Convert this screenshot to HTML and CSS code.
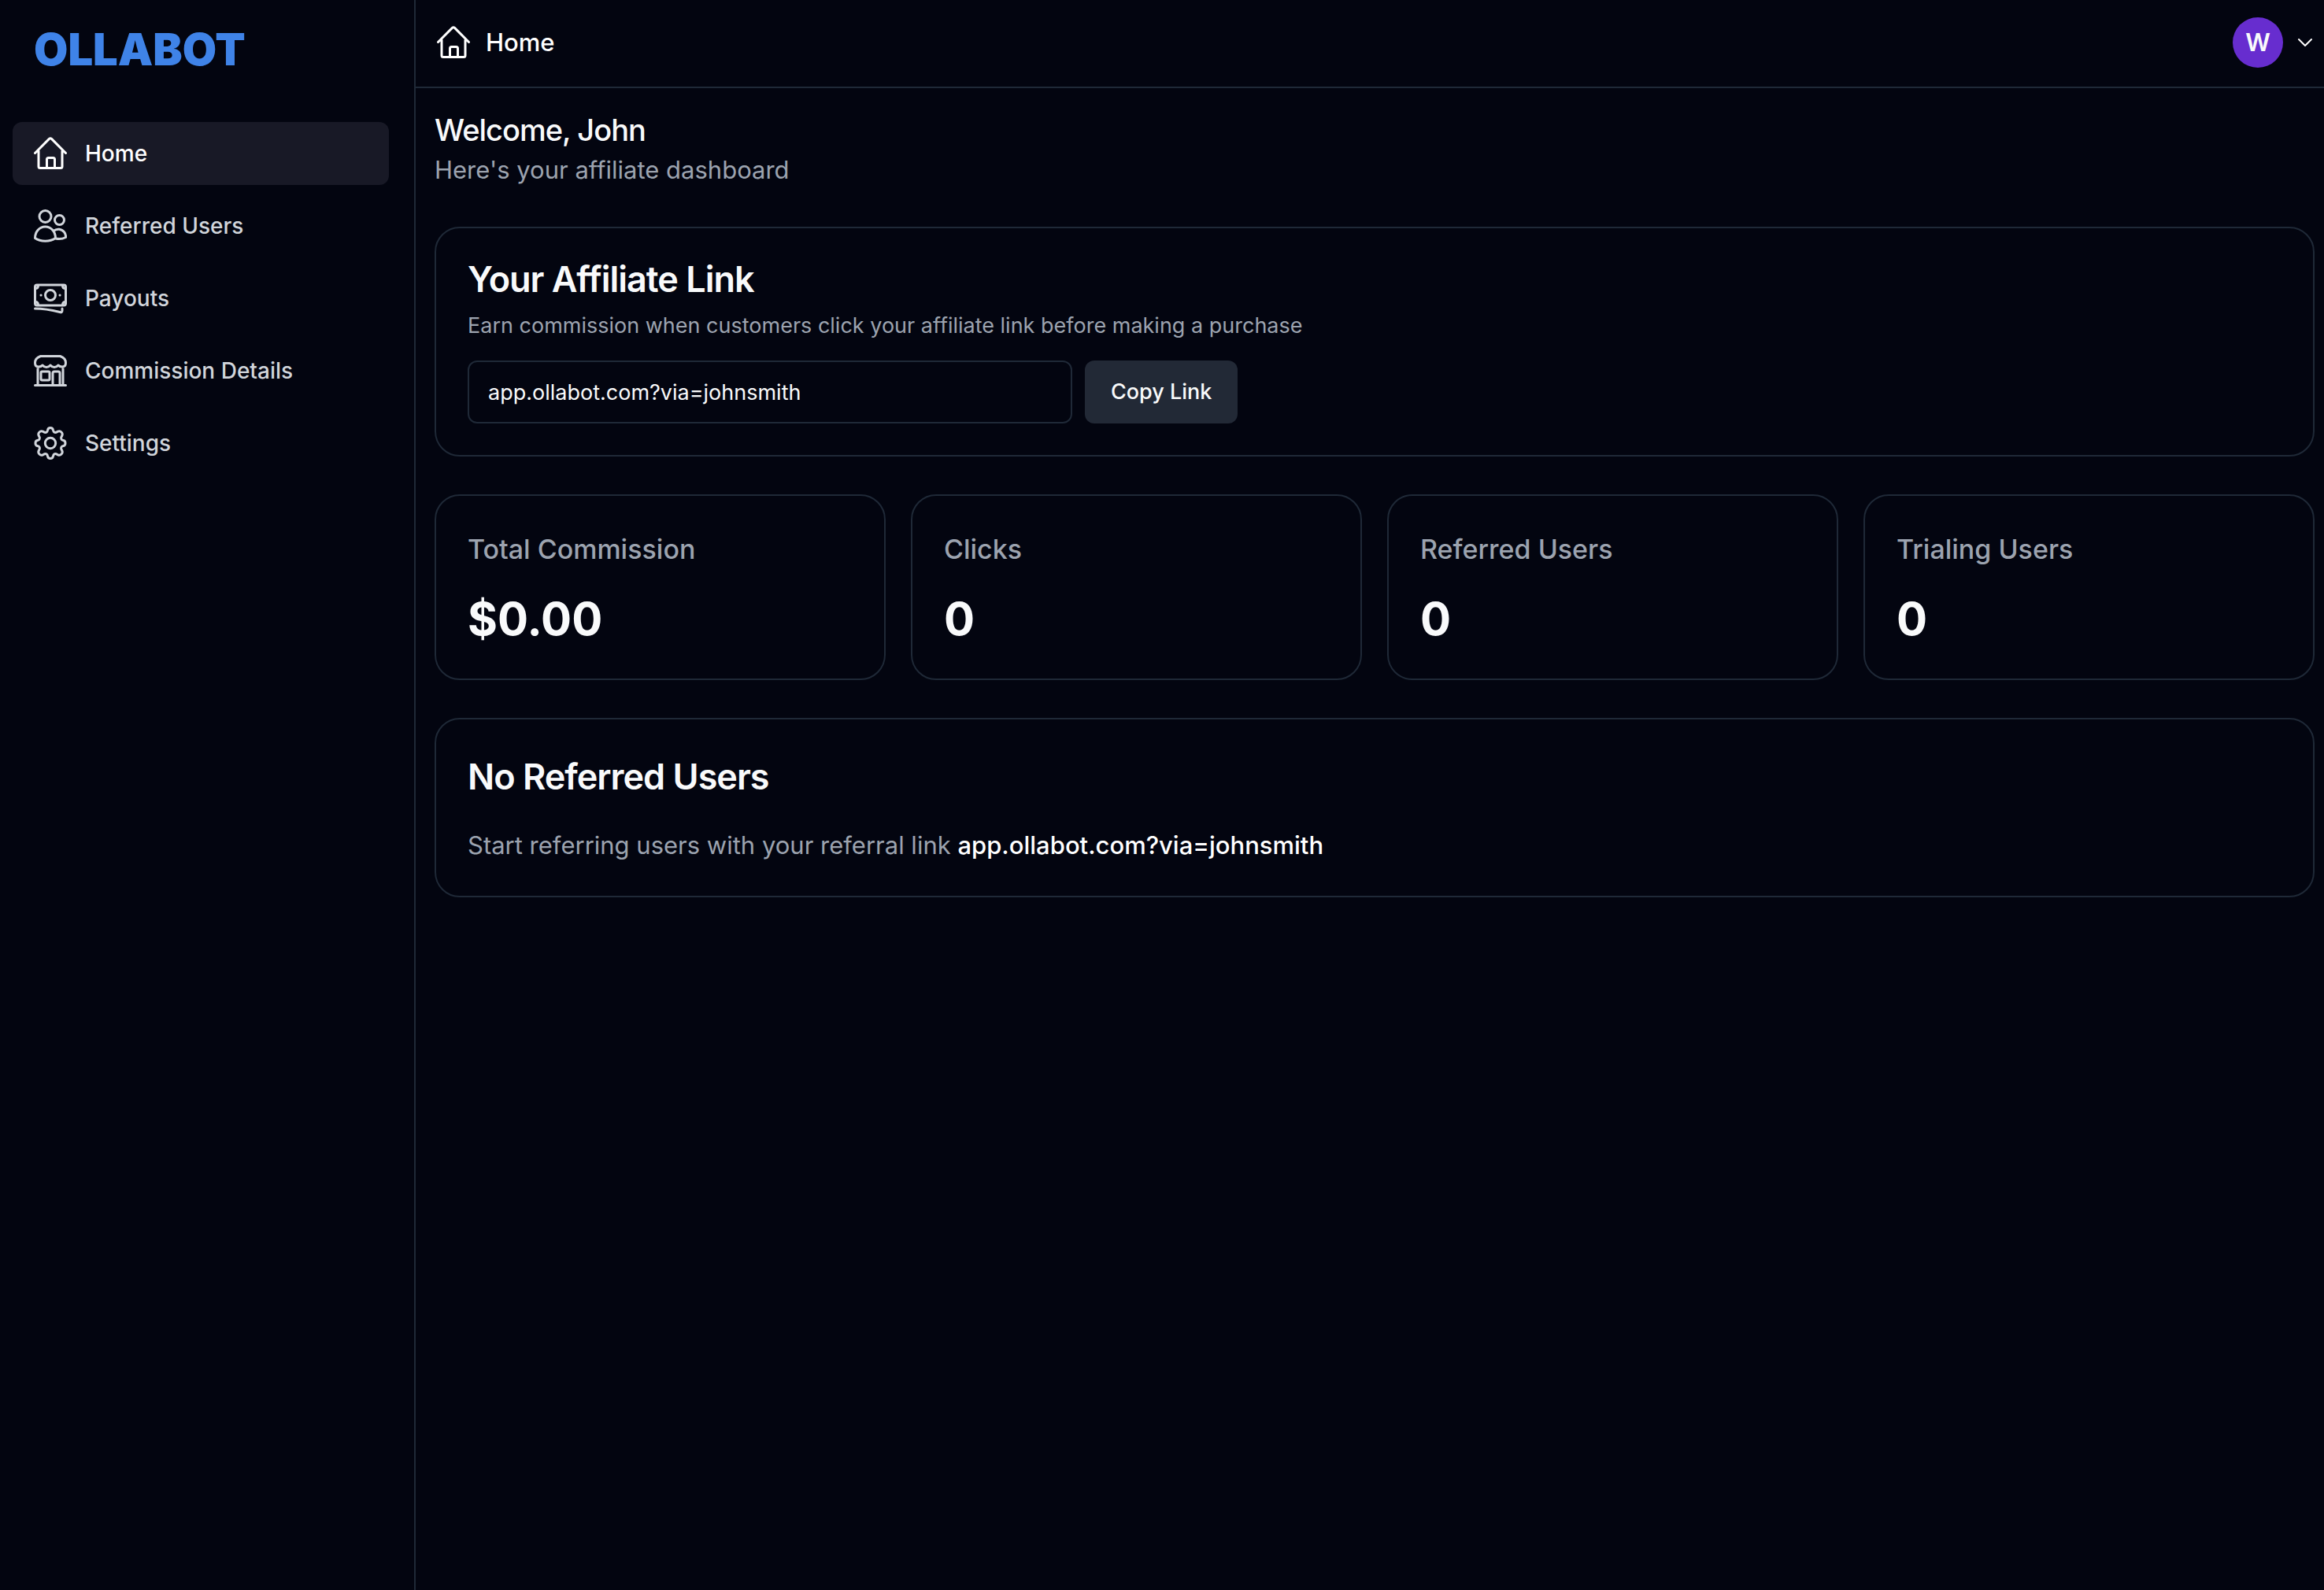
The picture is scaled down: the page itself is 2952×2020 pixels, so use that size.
FILE: index.html
```html
<!DOCTYPE html>
<html lang="en">
<head>
<meta charset="utf-8">
<title>Ollabot Affiliates</title>
<link rel="stylesheet" href="styles.css">
</head>
<body>
<svg class="sprite" aria-hidden="true">
  <symbol id="home" viewBox="0 0 42 42"><path d="M6 18V37.500Q6 39.500 8 39.500H34Q36 39.500 36 37.500V18M1.500 20.500 19.500 2.400Q21 1 22.500 2.400L40.500 20.500M16.500 39V28.500Q16.500 26.500 18.500 26.500H24.500Q26.500 26.500 26.500 28.500V39"/></symbol>
  <symbol id="users" viewBox="0 0 42 42"><circle cx="14.500" cy="9" r="7.500"/><circle cx="32.500" cy="13.500" r="6"/><path d="M1.500 36.500C1.500 28.500 7 22 14.500 22S27.500 28.500 27.500 36.500C20.500 41.500 8.500 41.500 1.500 36.500ZM25 27.500C27 25.800 29.500 25 32 25.200C37.500 25.800 41 30.500 40.500 35.500C36.500 37.500 32 38 27.500 37"/></symbol>
  <symbol id="payouts" viewBox="0 0 42 42"><rect x="1.500" y="4" width="39" height="26" rx="2.500"/><circle cx="21" cy="17" r="6.500"/><path d="M2 8.500Q5.500 8.500 5.500 5M36.500 5Q36.500 8.500 40 8.500M2 25.500Q5.500 25.500 5.500 29.500M36.500 29.500Q36.500 25.500 40 25.500M1.500 34C14 34 23 36 33 38.500Q36 39.500 36 36.500V34"/><path d="M9 17h.1M33 17h.1"/></symbol>
  <symbol id="store" viewBox="0 0 42 42"><path d="M5 16V39.500M37 16V39.500M1.500 39.500H40.500M8.500 2.500H33.500Q40.500 5 40.500 11Q40.500 16 36 16Q32.500 16 31 14Q29 16.500 26 16.500Q23 16.500 21 14Q19 16.500 16 16.500Q13 16.500 11 14Q9.500 16 6 16Q1.500 16 1.500 11Q1.500 5 8.500 2.500ZM24 39V24Q24 22 26 22H31Q33 22 33 24V39"/><rect x="9" y="22" width="11" height="11" rx="1.500"/></symbol>
  <symbol id="gear" viewBox="0 0 42 42"><circle cx="21" cy="21" r="6.700"/><path d="M17.500 4.500Q18 1.500 21 1.500T24.500 4.500Q25.200 8 28.300 7.300L30.500 6.200Q33 5 35 7T35.800 11.500L34.700 13.700Q34 16.800 37.500 17.500Q40 18 40 21T37.500 24.500Q34 25.200 34.700 28.300L35.800 30.500Q37 33 35 35T30.500 35.800L28.300 34.700Q25.200 34 24.500 37.500Q24 40.500 21 40.500T17.500 37.500Q16.800 34 13.700 34.700L11.500 35.800Q9 37 7 35T6.200 30.500L7.300 28.300Q8 25.200 4.500 24.500Q2 24 2 21T4.500 17.500Q8 16.800 7.300 13.700L6.200 11.500Q5 9 7 7T11.500 6.200L13.700 7.300Q16.800 8 17.500 4.500Z"/></symbol>
</svg>
<div class="app">
  <aside class="sidebar">
    <a class="logo" href="#">OLLABOT</a>
    <nav class="nav">
      <a class="nav-item active" href="#"><svg class="icon"><use href="#home"/></svg>Home</a>
      <a class="nav-item" href="#"><svg class="icon"><use href="#users"/></svg>Referred Users</a>
      <a class="nav-item" href="#"><svg class="icon"><use href="#payouts"/></svg>Payouts</a>
      <a class="nav-item" href="#"><svg class="icon"><use href="#store"/></svg>Commission Details</a>
      <a class="nav-item" href="#"><svg class="icon"><use href="#gear"/></svg>Settings</a>
    </nav>
  </aside>
  <div class="main">
    <header class="topbar">
      <div class="crumb"><svg class="icon"><use href="#home"/></svg>Home</div>
      <button class="account" type="button" aria-label="Account menu">
        <span class="avatar">W</span>
        <svg class="chevron" viewBox="0 0 18 10"><path d="M1 1 9 9 17 1"/></svg>
      </button>
    </header>
    <main class="content">
      <div class="welcome">
        <h1>Welcome, John</h1>
        <p>Here's your affiliate dashboard</p>
      </div>
      <section class="card">
        <h2>Your Affiliate Link</h2>
        <p class="hint"><label for="link">Earn commission when customers click your affiliate link before making a purchase</label></p>
        <div class="link-row">
          <input id="link" class="link-input" type="text" value="app.ollabot.com?via=johnsmith" readonly>
          <button class="copy" type="button">Copy Link</button>
        </div>
      </section>
      <div class="stats">
        <section class="card stat"><h3>Total Commission</h3><p>$0.00</p></section>
        <section class="card stat"><h3>Clicks</h3><p>0</p></section>
        <section class="card stat"><h3>Referred Users</h3><p>0</p></section>
        <section class="card stat"><h3>Trialing Users</h3><p>0</p></section>
      </div>
      <section class="card empty">
        <h2>No Referred Users</h2>
        <p>Start referring users with your referral link <a href="#">app.ollabot.com?via=johnsmith</a></p>
      </section>
    </main>
  </div>
</div>
</body>
</html>
```
FILE: styles.css
```css
* { box-sizing: border-box; margin: 0; }
body {
  background: #030510;
  color: #f9fafb;
  font-family: Inter, "Liberation Sans", sans-serif;
  font-size: 27px;
  line-height: 40px;
}
a { color: inherit; text-decoration: none; }
button, input { font: inherit; color: inherit; }
.sprite { display: none; }
.icon {
  width: 42px;
  height: 42px;
  flex: none;
  fill: none;
  stroke: currentColor;
  stroke-width: 3px;
  stroke-linecap: round;
  stroke-linejoin: round;
}
.app { display: flex; min-height: 100vh; }
.sidebar {
  width: 528px;
  flex: none;
  padding: 28px 32px 0 16px;
  border-right: 2px solid #1f2937;
}
.logo {
  display: block;
  padding-left: 27px;
  color: #3f83e8;
  font-size: 56px;
  line-height: 70px;
  font-weight: 900;
}
.nav { display: flex; flex-direction: column; gap: 12px; margin-top: 57px; }
.nav-item {
  display: flex;
  align-items: center;
  gap: 23px;
  height: 80px;
  padding: 0 27px;
  border-radius: 12px;
  color: #d1d5db;
  font-size: 28px;
  font-weight: 500;
}
.nav-item.active { background: #181926; color: #fff; }
.main { flex: 1; min-width: 0; }
.topbar {
  display: flex;
  align-items: center;
  justify-content: space-between;
  height: 112px;
  padding: 0 15px 2px 27px;
  border-bottom: 2px solid #1f2937;
}
.crumb { display: flex; align-items: center; gap: 20px; font-size: 31px; font-weight: 500; color: #fff; }
.account { display: flex; align-items: center; gap: 19px; padding: 0; border: 0; background: none; }
.avatar { width: 64px; height: 64px; border-radius: 50%; background: #672dcf; font-size: 31px; line-height: 64px; font-weight: 600; text-align: center; }
.chevron { width: 18px; height: 10px; fill: none; stroke: #fff; stroke-width: 2px; stroke-linecap: round; stroke-linejoin: round; overflow: visible; }
.content { padding: 32px 12px 48px 24px; }
.welcome { margin-bottom: 50px; }
h1 { font-size: 38px; line-height: 42px; font-weight: 500; letter-spacing: -1px; }
.welcome p { margin-top: 8px; font-size: 31px; line-height: 44px; color: #9ca3af; }
.card { border: 2px solid #1f2937; border-radius: 32px; padding: 40px; }
h2 { font-size: 45px; line-height: 50px; font-weight: 600; letter-spacing: -1px; }
.hint { margin-top: 14px; color: #9ca3af; }
.link-row { display: flex; gap: 16px; margin-top: 24px; }
.link-input { width: 768px; height: 80px; padding: 0 24px; border: 2px solid #1f2937; border-radius: 12px; background: transparent; }
.copy { height: 80px; padding: 0 33px; border: 0; border-radius: 12px; background: #222936; font-weight: 500; }
.stats { display: grid; grid-template-columns: repeat(4, 1fr); gap: 32px; margin: 48px 0; }
h3 { font-size: 34px; line-height: 56px; font-weight: 500; color: #9ca3af; }
.stat p { margin-top: 24px; font-size: 58px; line-height: 72px; font-weight: 700; }
.empty { padding-top: 48px; }
.empty p { margin-top: 38px; font-size: 31px; line-height: 48px; color: #9ca3af; }
.empty a { color: #fff; font-weight: 500; }
```
